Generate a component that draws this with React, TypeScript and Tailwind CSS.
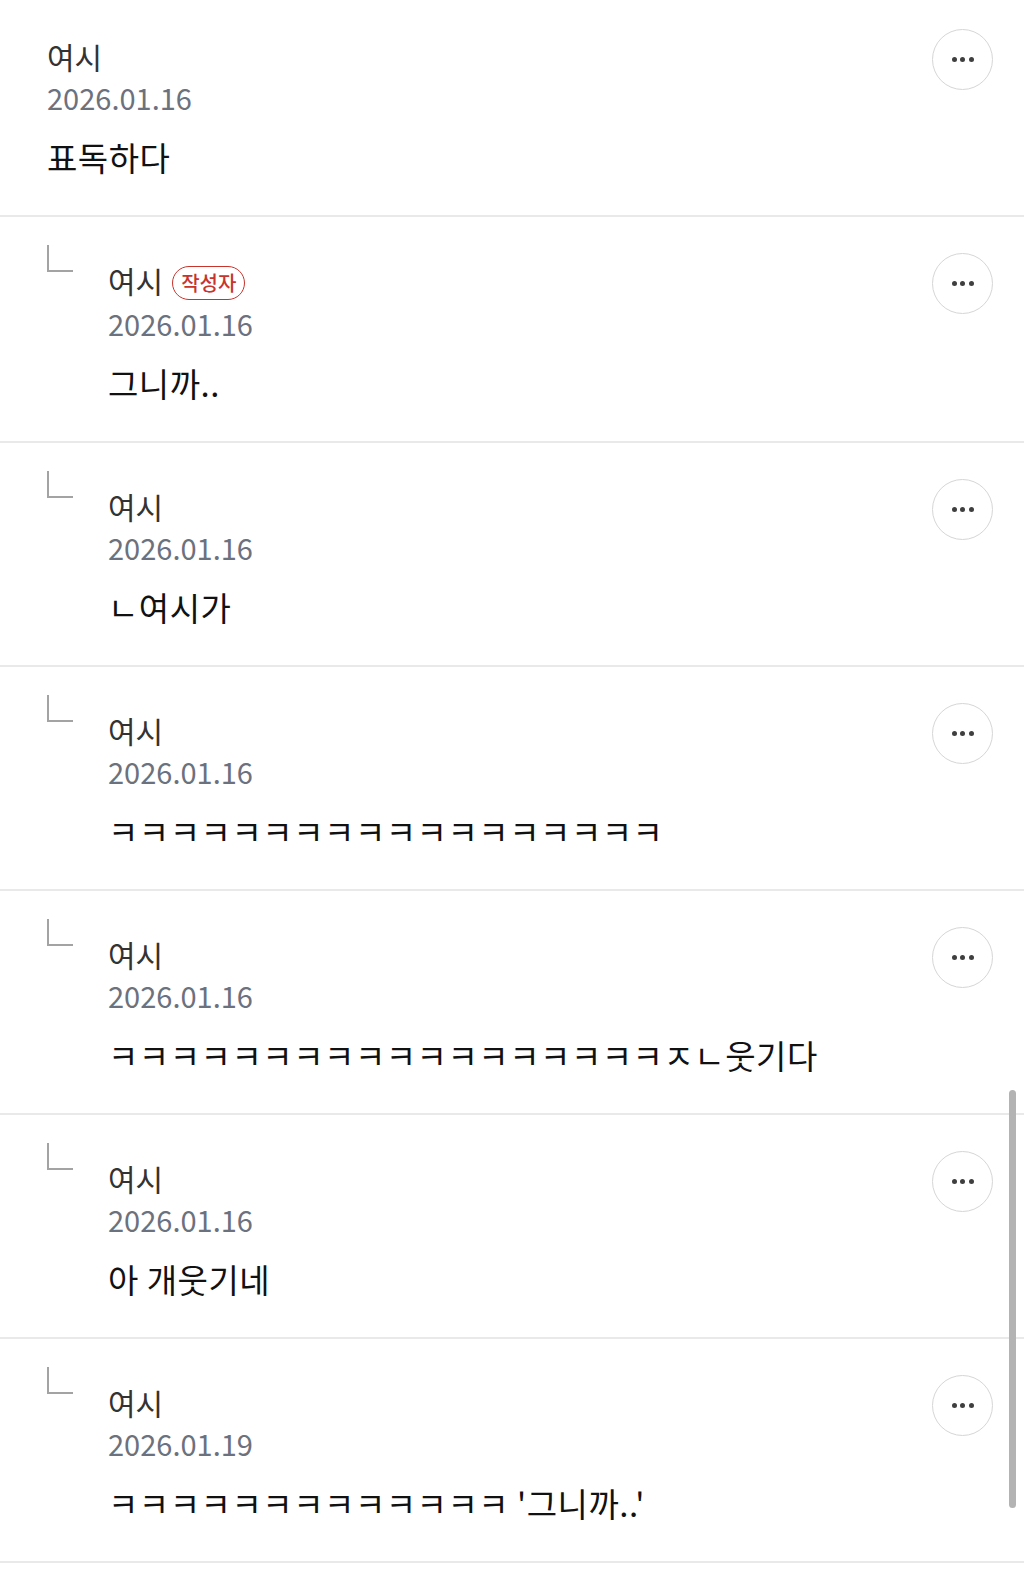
import React from "react";

type Comment = {
  name: string;
  date: string;
  text: string;
  reply: boolean;
  author?: boolean;
};

const comments: Comment[] = [
  { name: "여시", date: "2026.01.16", text: "표독하다", reply: false },
  { name: "여시", date: "2026.01.16", text: "그니까..", reply: true, author: true },
  { name: "여시", date: "2026.01.16", text: "ㄴ여시가", reply: true },
  { name: "여시", date: "2026.01.16", text: "ㅋㅋㅋㅋㅋㅋㅋㅋㅋㅋㅋㅋㅋㅋㅋㅋㅋㅋ", reply: true },
  { name: "여시", date: "2026.01.16", text: "ㅋㅋㅋㅋㅋㅋㅋㅋㅋㅋㅋㅋㅋㅋㅋㅋㅋㅋㅈㄴ웃기다", reply: true },
  { name: "여시", date: "2026.01.16", text: "아 개웃기네", reply: true },
  { name: "여시", date: "2026.01.19", text: "ㅋㅋㅋㅋㅋㅋㅋㅋㅋㅋㅋㅋㅋ '그니까..'", reply: true },
];

const font = { fontFamily: '"Noto Sans CJK KR", "Noto Sans", sans-serif' };

function MoreButton({ first }: { first: boolean }) {
  return (
    <div
      className={`flex h-[61px] w-[61px] shrink-0 items-center justify-center gap-[3.5px] rounded-full border-[1.5px] border-[#d6d6d6] ${
        first ? "mt-[29px]" : "mt-[36px]"
      }`}
    >
      <span className="h-[5px] w-[5px] rounded-full bg-[#3f3f3f]" />
      <span className="h-[5px] w-[5px] rounded-full bg-[#3f3f3f]" />
      <span className="h-[5px] w-[5px] rounded-full bg-[#3f3f3f]" />
    </div>
  );
}

function CommentRow({ c, first }: { c: Comment; first: boolean }) {
  return (
    <div className="flex border-b-2 border-[#e9e9e9] pl-[47px] pr-[31px]">
      {c.reply && (
        <div className="w-[61px] shrink-0 pt-[28px]">
          <div className="h-[27px] w-[26px] border-b-2 border-l-2 border-[#a3a3a3]" />
        </div>
      )}
      <div className={`min-w-0 flex-1 pb-[38px] ${first ? "pt-[38px]" : "pt-[45px]"}`}>
        <div className="flex items-start">
          <span className="text-[30px] leading-[36px] text-[#333333]">{c.name}</span>
          {c.author && (
            <span className="ml-[9px] mt-[4px] rounded-full border-[1.5px] border-[#c8342c] px-[8px] text-[20px] font-medium leading-[32px] text-[#c8342c]">
              작성자
            </span>
          )}
        </div>
        <div className="mt-[5px] text-[29px] leading-[36px] text-[#6c717e]">{c.date}</div>
        <div className="mt-[22px] whitespace-nowrap text-[33px] leading-[40px] tracking-[0.5px] text-[#111111]">
          {c.text}
        </div>
      </div>
      <MoreButton first={first} />
    </div>
  );
}

export default function App() {
  return (
    <div className="relative min-h-[1579px] w-full overflow-hidden bg-white" style={font}>
      {comments.map((c, i) => (
        <CommentRow key={i} c={c} first={i === 0} />
      ))}
      <div className="absolute right-[8px] top-[1090px] h-[418px] w-[7px] rounded-full bg-[#b3b3b3]" />
    </div>
  );
}
